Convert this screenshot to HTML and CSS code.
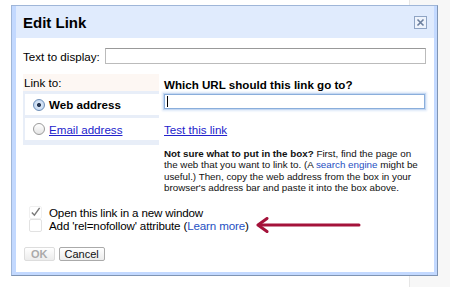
FILE: index.html
```html
<!DOCTYPE html>
<html>
<head>
<meta charset="utf-8">
<link rel="stylesheet" href="styles.css">
</head>
<body>
<div class="dialog">
  <div class="titlebar">
    <span class="title">Edit Link</span>
    <span class="close"><svg width="11" height="11" viewBox="0 0 11 11"><path d="M2.5 2.5 L8.5 8.5 M8.5 2.5 L2.5 8.5" stroke="#6b7f9e" stroke-width="1.6" fill="none"/></svg></span>
  </div>
  <div class="content">
    <div class="display-row">
      <label class="lbl">Text to display:</label>
      <div class="textbox"></div>
    </div>
    <div class="cols">
      <div class="linkto">
        <div class="linkto-head">Link to:</div>
        <div class="opt opt-sel"><span class="radio radio-on"></span><span class="opt-text">Web address</span></div>
        <div class="opt"><span class="radio"></span><a class="opt-link" href="#">Email address</a></div>
      </div>
      <div class="urlcol">
        <div class="q">Which URL should this link go to?</div>
        <div class="urlbox"><span class="caret"></span></div>
        <a class="test" href="#">Test this link</a>
        <p class="help"><b>Not sure what to put in the box?</b> First, find the page on the web that you want to link to. (A <span class="blue">search engine</span> might be useful.) Then, copy the web address from the box in your browser's address bar and paste it into the box above.</p>
      </div>
    </div>
    <div class="checks">
      <div class="check"><span class="cb cb-on"><svg width="12" height="12" viewBox="0 0 12 12"><path d="M2 6.5 L4.8 9.5 L10.5 1.5" stroke="#7a7a7a" stroke-width="1.6" fill="none"/></svg></span>Open this link in a new window</div>
      <div class="check"><span class="cb"></span>Add 'rel=nofollow' attribute (<span class="blue">Learn more</span>)<svg class="arrow" width="106" height="16" viewBox="0 0 106 16"><path d="M104 8 L4 8" stroke="#a4123a" stroke-width="3" stroke-linecap="round" fill="none"/><path d="M12 1.5 L3 8 L12 14.5" stroke="#a4123a" stroke-width="3" stroke-linecap="round" stroke-linejoin="round" fill="none"/></svg></div>
    </div>
    <div class="buttons">
      <span class="btn btn-dis">OK</span>
      <span class="btn">Cancel</span>
    </div>
  </div>
</div>
</body>
</html>
```
FILE: styles.css
```css
html, body {
  margin: 0;
  padding: 0;
}
body {
  width: 450px;
  height: 287px;
  overflow: hidden;
  font-family: "Liberation Sans", Arial, sans-serif;
  font-size: 11.6px;
  color: #000;
  background: linear-gradient(to right, #fff 0, #fff 409px, #e6e6e6 409px, #e6e6e6 410px, #f7f7f7 410px);
}
.dialog {
  margin: 5px 0 0 11px;
  width: 427px;
  height: 271px;
  border: 1px solid #9fb6d8;
  border-right-color: #7f94b3;
  border-bottom-color: #7f94b3;
  background: #c3d9ff;
  padding: 0 3px 3px 4px;
  box-sizing: border-box;
  display: flex;
  flex-direction: column;
}
.titlebar {
  height: 32px;
  background: #e0ebfd;
  display: flex;
  align-items: center;
  justify-content: space-between;
  padding: 0 7px 0 7px;
  flex: none;
}
.title {
  font-weight: bold;
  font-size: 15px;
  margin-top: 1px;
}
.close {
  width: 11px;
  height: 11px;
  border: 1px solid #8fa4c4;
  background: #eef3fc;
  display: flex;
}
.content {
  flex: 1;
  background: #fff;
  padding: 10px 8px 0 7px;
}
.display-row {
  display: flex;
  align-items: center;
}
.lbl {
  margin-right: 5px;
}
.textbox {
  flex: 1;
  height: 14px;
  border: 1px solid #bbb;
  border-top-color: #999;
}
.cols {
  display: flex;
  align-items: flex-start;
  margin-top: 10px;
}
.linkto {
  width: 134px;
  flex: none;
  background: #e8eef8;
  padding: 0 0 5px 2px;
}
.linkto-head {
  background: #fdf7f3;
  margin-left: -2px;
  height: 17px;
  line-height: 17px;
  padding-left: 1px;
  margin-bottom: 3px;
}
.opt {
  background: #fff;
  height: 21px;
  display: flex;
  align-items: center;
  padding-left: 8px;
  margin-bottom: 3px;
}
.opt + .opt {
  height: 22px;
  margin-bottom: 0;
}
.opt-sel .opt-text {
  font-weight: bold;
}
.radio {
  width: 10px;
  height: 10px;
  border-radius: 50%;
  border: 1px solid #9a9a9a;
  background: linear-gradient(#fff, #e4e4e4);
  margin-right: 4px;
  flex: none;
}
.radio-on {
  border-color: #6e8fb8;
  background: radial-gradient(circle, #2a3a55 0, #2a3a55 1.6px, #d8e6f7 2.4px, #b7cfee 100%);
}
.opt-link, .test {
  color: #2222cc;
  text-decoration: underline;
}
.urlcol {
  flex: 1;
  padding-left: 5px;
}
.q {
  font-weight: bold;
  line-height: 14px;
  margin-top: 4px;
}
.urlbox {
  height: 13px;
  border: 1px solid #8aaedb;
  box-shadow: 0 0 0 1px #c5d8f2, 0 0 2px 2px #dce8f8;
  margin-top: 2px;
  margin-right: 1px;
  display: flex;
  align-items: center;
  padding-left: 2px;
}
.caret {
  width: 1px;
  height: 11px;
  background: #000;
}
.test {
  display: block;
  width: fit-content;
  line-height: 14px;
  margin-top: 14px;
}
.help {
  width: 257px;
  font-size: 9.8px;
  line-height: 11.4px;
  margin: 11px 0 0 0;
  color: #111;
}
.blue {
  color: #1e4fc2;
}
.checks {
  margin-top: 12px;
  padding-left: 6px;
  letter-spacing: -0.15px;
}
.check {
  display: flex;
  align-items: center;
  height: 13px;
}
.cb {
  width: 11px;
  height: 11px;
  border: 1px solid #e2e2e2;
  border-radius: 2px;
  margin-right: 7px;
  display: flex;
  align-items: center;
  justify-content: center;
  background: #fff;
  flex: none;
}
.cb-on {
  border-color: #f0f0f0;
}
.arrow {
  margin-left: 6px;
}
.buttons {
  display: flex;
  gap: 4px;
  margin-top: 15px;
  padding-left: 1px;
}
.btn {
  font-size: 11px;
  height: 12px;
  line-height: 12px;
  padding: 0 5px;
  border: 1px solid #aaa;
  border-radius: 2px;
  background: linear-gradient(#fff, #ececec);
  color: #111;
}
.btn-dis {
  color: #aaa;
  border-color: #ddd;
  font-weight: bold;
  padding: 0 6px;
}
```
